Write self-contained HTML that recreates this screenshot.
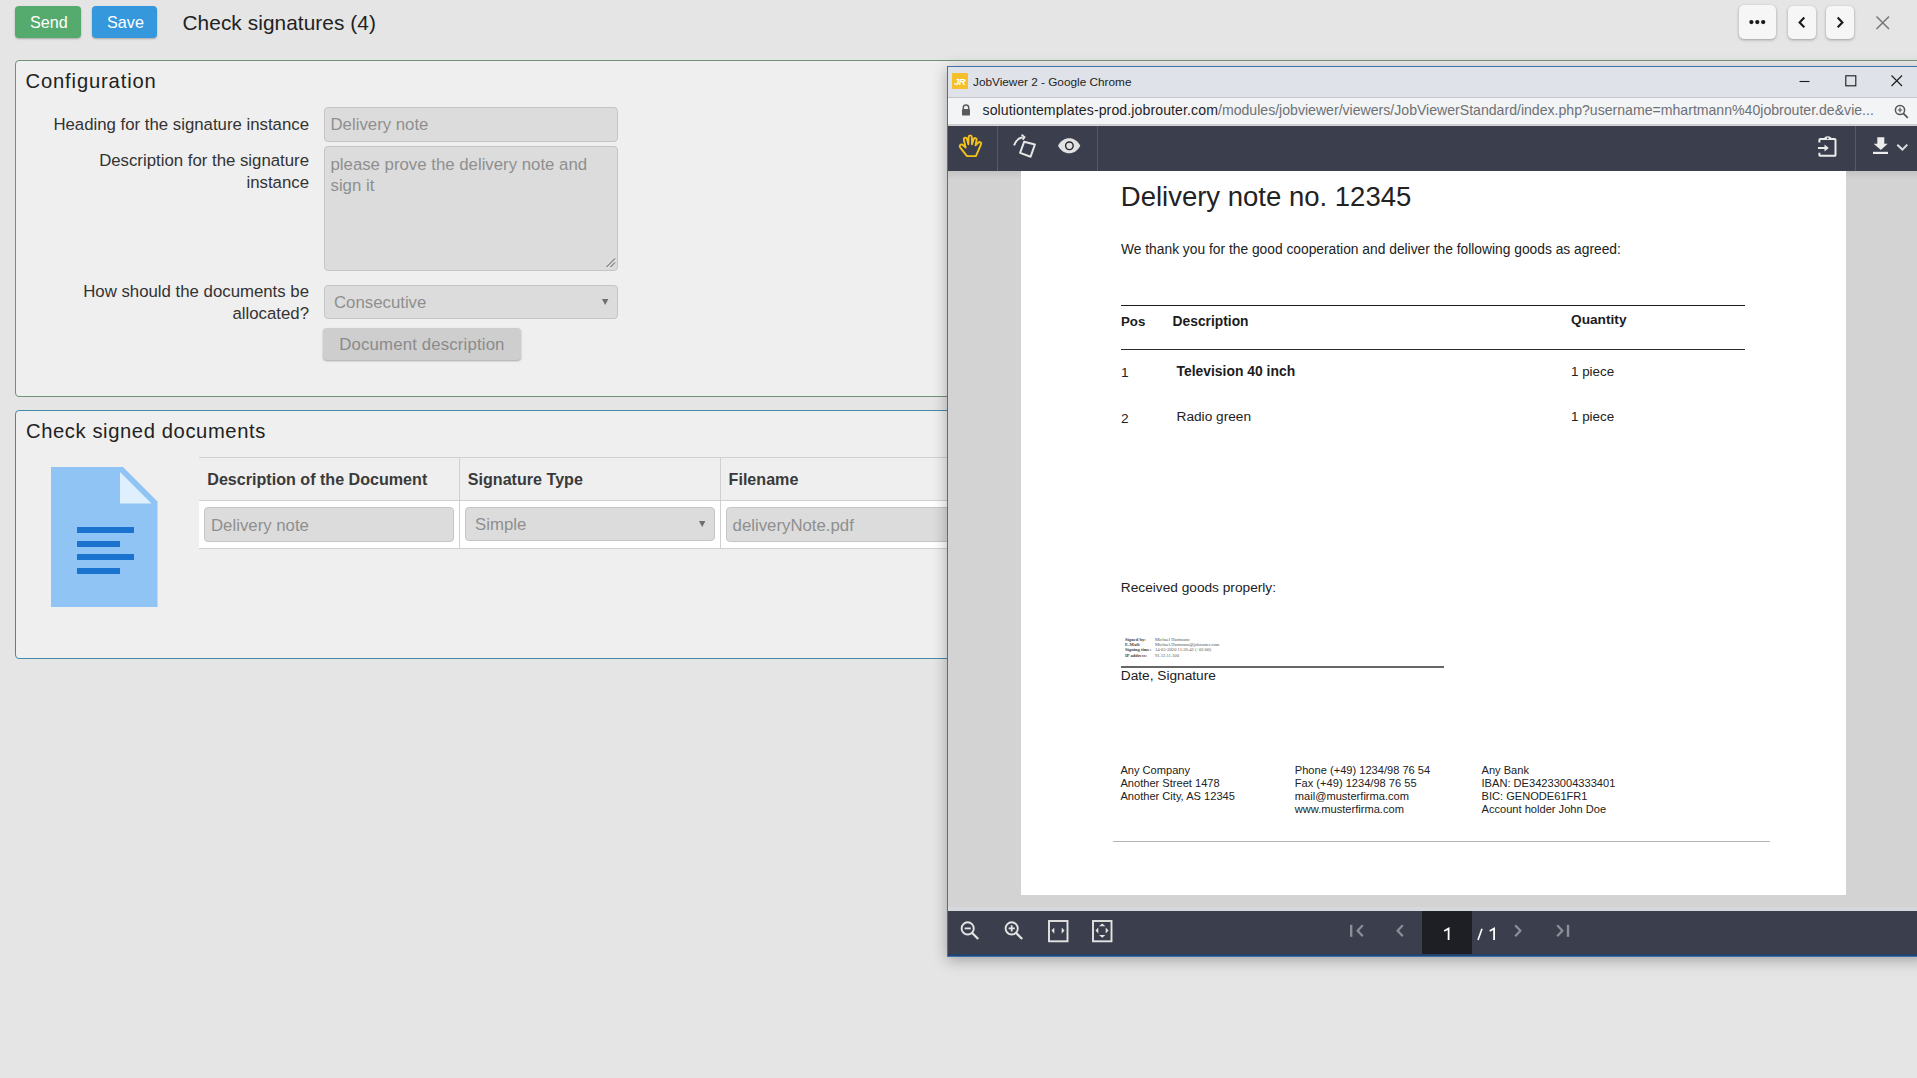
<!DOCTYPE html>
<html><head><meta charset="utf-8">
<style>
*{box-sizing:border-box;margin:0;padding:0}
html,body{width:1917px;height:1078px;overflow:hidden}
body{background:#e5e5e5;font-family:"Liberation Sans",sans-serif;position:relative;color:#222}
.a{position:absolute}
.t{position:absolute;line-height:1;white-space:nowrap}
.btn{position:absolute;border-radius:4px;box-shadow:0 1px 2px rgba(0,0,0,.28)}
.tbtn{position:absolute;background:#f6f6f6;border-radius:5px;box-shadow:0 1px 3px rgba(0,0,0,.32)}
.panel{position:absolute;background:#efefef;border-radius:4px}
.inp{position:absolute;background:#dcdcdc;border:1px solid #c5c5c5;border-radius:4px}
svg{position:absolute;overflow:visible}
</style></head>
<body>
<div class="btn" style="left:15px;top:6px;width:66px;height:32px;background:#55ab6d"></div>
<div class="btn" style="left:92px;top:6px;width:65px;height:32px;background:#3598dc"></div>
<div class="t" style="left:30px;top:14px;font-size:16.2px;color:#fff">Send</div>
<div class="t" style="left:107px;top:14px;font-size:16.2px;color:#fff">Save</div>
<div class="t" style="left:182.5px;top:13px;font-size:20.8px;color:#222;letter-spacing:0.08px">Check signatures (4)</div>
<div class="tbtn" style="left:1739px;top:5px;width:37px;height:34px"></div>
<div class="tbtn" style="left:1788px;top:6px;width:28px;height:33px"></div>
<div class="tbtn" style="left:1826px;top:6px;width:28px;height:33px"></div>
<svg style="left:1739px;top:5px" width="37" height="34"><circle cx="12.4" cy="17.1" r="2.15" fill="#1a1a1a"/><circle cx="18.3" cy="17.1" r="2.15" fill="#1a1a1a"/><circle cx="24.2" cy="17.1" r="2.15" fill="#1a1a1a"/></svg>
<svg style="left:1788px;top:6px" width="28" height="33"><path d="M16.3 11.6 L11.6 16.4 L16.3 21.2" fill="none" stroke="#1a1a1a" stroke-width="2.1"/></svg>
<svg style="left:1826px;top:6px" width="28" height="33"><path d="M11.7 11.6 L16.4 16.4 L11.7 21.2" fill="none" stroke="#1a1a1a" stroke-width="2.1"/></svg>
<svg style="left:1876px;top:16px" width="14" height="14"><path d="M0.5 0.5 L13 13 M13 0.5 L0.5 13" fill="none" stroke="#7a7a7a" stroke-width="1.6"/></svg>
<div class="panel" style="left:15px;top:60px;width:2000px;height:337px;border:1px solid #71917a"></div>
<div class="t" style="left:25.5px;top:71px;font-size:20.2px;color:#222;letter-spacing:0.85px">Configuration</div>
<div class="t" style="right:1608px;text-align:right;top:117px;font-size:16.8px;color:#333">Heading for the signature instance</div>
<div class="t" style="right:1608px;text-align:right;top:153px;font-size:16.8px;color:#333">Description for the signature</div>
<div class="t" style="right:1608px;text-align:right;top:175px;font-size:16.8px;color:#333">instance</div>
<div class="t" style="right:1608px;text-align:right;top:284px;font-size:16.8px;color:#333">How should the documents be</div>
<div class="t" style="right:1608px;text-align:right;top:306px;font-size:16.8px;color:#333">allocated?</div>
<div class="inp" style="left:324px;top:107px;width:294px;height:35px"></div>
<div class="t" style="left:330.5px;top:117px;font-size:16.8px;color:#8f8f8f">Delivery note</div>
<div class="inp" style="left:324px;top:146px;width:294px;height:125px"></div>
<div class="t" style="left:330.5px;top:157px;font-size:16.8px;color:#8f8f8f">please prove the delivery note and</div>
<div class="t" style="left:330.5px;top:178px;font-size:16.8px;color:#8f8f8f">sign it</div>
<svg style="left:604px;top:257px" width="12" height="12"><path d="M11 1.5 L2.5 10 M11 5.5 L6.5 10" stroke="#505050" stroke-width="1"/></svg>
<div class="inp" style="left:324px;top:285px;width:294px;height:34px"></div>
<div class="t" style="left:334px;top:295px;font-size:16.8px;color:#8f8f8f">Consecutive</div>
<svg style="left:602px;top:299px" width="8" height="8"><path d="M0 0 H6.4 L3.2 6 Z" fill="#707070"/></svg>
<div class="a" style="left:323px;top:328px;width:198px;height:32px;background:#cecece;border-radius:4px;box-shadow:0 1px 2px rgba(0,0,0,.3)"></div>
<div class="t" style="left:339.3px;top:337px;font-size:16.8px;color:#8b8b8b;letter-spacing:0.15px">Document description</div>
<div class="panel" style="left:15px;top:410px;width:2000px;height:249px;border:1px solid #4589a8"></div>
<div class="t" style="left:26px;top:421px;font-size:20.2px;color:#222;letter-spacing:0.6px">Check signed documents</div>
<svg style="left:50px;top:467px" width="108" height="141" viewBox="0 0 108 141">
<path d="M1 0 H73 L107.5 34.5 V140 H1 Z" fill="#90c4f4"/>
<path d="M70 5 L101.5 36.6 H70 Z" fill="#def0fd"/>
<rect x="27" y="60" width="57" height="6" fill="#1b73d0"/>
<rect x="27" y="74" width="43" height="6" fill="#1b73d0"/>
<rect x="27" y="87" width="57" height="6" fill="#1b73d0"/>
<rect x="27" y="101" width="43" height="6" fill="#1b73d0"/>
</svg>
<div class="a" style="left:199px;top:457px;width:760px;height:44px;border-top:1px solid #d0d0d0;border-bottom:1px solid #d0d0d0"></div>
<div class="a" style="left:199px;top:501px;width:760px;height:48px;background:#fff;border-bottom:1px solid #d0d0d0"></div>
<div class="a" style="left:459px;top:457px;width:1px;height:92px;background:#d0d0d0"></div>
<div class="a" style="left:720px;top:457px;width:1px;height:92px;background:#d0d0d0"></div>
<div class="t" style="left:207.3px;top:471px;font-size:16.1px;color:#3a3a3a;font-weight:bold">Description of the Document</div>
<div class="t" style="left:467.8px;top:471px;font-size:16.1px;color:#3a3a3a;font-weight:bold">Signature Type</div>
<div class="t" style="left:728.6px;top:471px;font-size:16.1px;color:#3a3a3a;font-weight:bold">Filename</div>
<div class="inp" style="left:204px;top:507px;width:250px;height:35px"></div>
<div class="t" style="left:211px;top:518px;font-size:16.8px;color:#8f8f8f">Delivery note</div>
<div class="inp" style="left:465px;top:507px;width:250px;height:34px"></div>
<div class="t" style="left:475px;top:517px;font-size:16.8px;color:#8f8f8f">Simple</div>
<svg style="left:699px;top:521px" width="8" height="8"><path d="M0 0 H6.4 L3.2 6 Z" fill="#707070"/></svg>
<div class="inp" style="left:726px;top:507px;width:260px;height:35px"></div>
<div class="t" style="left:732.6px;top:518px;font-size:16.8px;color:#8f8f8f">deliveryNote.pdf</div>
<div class="a" style="left:947px;top:66px;width:980px;height:891px;box-shadow:0 3px 14px rgba(0,0,0,.30)"></div>
<div class="a" style="left:947px;top:66px;width:980px;height:891px;background:#d3d3d3;border:1px solid #3f72aa;border-right:none"></div>
<div class="a" style="left:948px;top:67px;width:969px;height:31px;background:#dfe2e8;border-bottom:1px solid #c3c5c9"></div>
<div class="a" style="left:952px;top:72.5px;width:16px;height:16.5px;background:#f5c02a;border-radius:1px"></div>
<div class="t" style="left:954px;top:77px;font-size:9.5px;color:#fff;font-weight:bold;font-style:italic;letter-spacing:-0.5px">JR</div>
<div class="t" style="left:973px;top:77px;font-size:11.8px;color:#1e1e1e">JobViewer 2 - Google Chrome</div>
<svg style="left:1799px;top:80px" width="12" height="4"><path d="M0.5 1.5 H10.5" stroke="#1a1a1a" stroke-width="1.1"/></svg>
<svg style="left:1845px;top:75px" width="12" height="12"><rect x="0.8" y="0.8" width="10" height="10" fill="none" stroke="#1a1a1a" stroke-width="1.1"/></svg>
<svg style="left:1891px;top:75px" width="12" height="12"><path d="M0.5 0.5 L11 11 M11 0.5 L0.5 11" stroke="#1a1a1a" stroke-width="1.1"/></svg>
<div class="a" style="left:948px;top:98px;width:969px;height:27px;background:#f3f4f6;border-bottom:1px solid #cbcccf"></div>
<svg style="left:961px;top:104px" width="10" height="12"><path d="M2.3 5 V3.6 A2.7 2.7 0 0 1 7.7 3.6 V5" fill="none" stroke="#5a5a5a" stroke-width="1.5"/><rect x="1" y="5" width="8" height="6.5" rx="0.8" fill="#5a5a5a"/></svg>
<div class="t" style="left:982.5px;top:103px;font-size:14.1px;color:#1f1f1f"><span style="letter-spacing:0.1px">solutiontemplates-prod.jobrouter.com</span><span style="color:#6e7175">/modules/jobviewer/viewers/JobViewerStandard/index.php?username=mhartmann%40jobrouter.de&amp;vie...</span></div>
<svg style="left:1894px;top:104px" width="15" height="15"><circle cx="6" cy="6" r="4.6" fill="none" stroke="#555" stroke-width="1.5"/><path d="M9.3 9.3 L13.8 13.8" stroke="#555" stroke-width="1.8"/><path d="M3.8 6 H8.2 M6 3.8 V8.2" stroke="#555" stroke-width="1.2"/></svg>
<div class="a" style="left:948px;top:126px;width:969px;height:45px;background:#3b3e4c"></div>
<div class="a" style="left:997px;top:126px;width:1px;height:45px;background:#575a66"></div>
<div class="a" style="left:1097px;top:126px;width:1px;height:45px;background:#575a66"></div>
<div class="a" style="left:1855px;top:126px;width:1px;height:45px;background:#575a66"></div>
<svg style="left:955px;top:130px" width="32" height="32"><path d="M12 26.1 L5.3 17.6 Q4 15.7 5.6 14.7 Q6.9 14 8.1 15.2 L10.6 17.5 L8.9 10.1 Q8.5 8.1 10.1 7.7 Q11.5 7.4 12 9 L13.4 14.3 L13.6 7.1 Q13.7 5.4 15.2 5.4 Q16.7 5.4 16.8 7.1 L17 14.3 L18.6 9.4 Q19.1 7.8 20.5 8.1 Q21.9 8.5 21.6 10.1 L20.5 15.4 L23.4 12.6 Q24.6 11.6 25.7 12.5 Q26.6 13.5 25.8 14.8 L20.9 26.1 Z" fill="none" stroke="#f4c21c" stroke-width="1.9" stroke-linejoin="round"/></svg>
<svg style="left:1013px;top:133px" width="26" height="27"><path d="M1.1 12.4 Q3.3 5.6 9.6 4.3" fill="none" stroke="#e6e6e6" stroke-width="2"/><path d="M8.6 1.6 L11.5 4.1 L9.6 6.6" fill="none" stroke="#e6e6e6" stroke-width="1.9"/><path d="M11.2 8.7 L21.9 11.5 L17.6 23.7 L7.1 19.9 Z" fill="none" stroke="#e6e6e6" stroke-width="2" stroke-linejoin="round"/></svg>
<svg style="left:1058px;top:138px" width="24" height="17"><path d="M0 7.7 C5 -2.4 17.3 -2.4 22.3 7.7 C17.3 17.8 5 17.8 0 7.7 Z" fill="#e2e2e2"/><circle cx="11.4" cy="7.8" r="3.8" fill="#e2e2e2" stroke="#26282f" stroke-width="1.4"/></svg>
<svg style="left:1817px;top:135px" width="22" height="23"><path d="M2.4 7.5 V4.8 Q2.4 3.9 3.3 3.9 H17.6 Q18.5 3.9 18.5 4.8 V19.9 Q18.5 20.8 17.6 20.8 H3.3 Q2.4 20.8 2.4 19.9 V17.7" fill="none" stroke="#ececec" stroke-width="2"/><path d="M7 4.5 Q7 1.2 10.8 1.2 Q14.6 1.2 14.6 4.5 Z" fill="#ececec"/><circle cx="10.8" cy="3.3" r="0.9" fill="#3b3e4c"/><path d="M1 13 H8" stroke="#ececec" stroke-width="2"/><path d="M7.5 9.6 L11.8 13 L7.5 16.4 Z" fill="#ececec"/></svg>
<svg style="left:1873px;top:137px" width="16" height="18"><path d="M4.3 0.3 H11.3 V6.7 H14.7 L7.8 12.9 L0.7 6.7 H4.3 Z" fill="#ececec"/><rect x="0" y="14.8" width="15" height="2.2" fill="#ececec"/></svg>
<svg style="left:1896px;top:143px" width="13" height="9"><path d="M1.3 1.8 L6.4 6.6 L11.3 1.6" fill="none" stroke="#e0e0e0" stroke-width="2"/></svg>
<div class="a" style="left:1021px;top:171px;width:825px;height:724px;background:#fff"></div>
<div class="a" style="left:948px;top:171px;width:73px;height:8px;background:linear-gradient(rgba(0,0,0,.07),rgba(0,0,0,0))"></div>
<div class="a" style="left:1846px;top:171px;width:71px;height:8px;background:linear-gradient(rgba(0,0,0,.07),rgba(0,0,0,0))"></div>
<div class="t" style="left:1120.8px;top:183px;font-size:27.5px;color:#222">Delivery note no. 12345</div>
<div class="t" style="left:1121px;top:243px;font-size:13.8px;color:#222">We thank you for the good cooperation and deliver the following goods as agreed:</div>
<div class="a" style="left:1121px;top:304.5px;width:624px;height:1.4px;background:#1c1c1c"></div>
<div class="a" style="left:1121px;top:348.5px;width:624px;height:1.6px;background:#2a2a2a"></div>
<div class="t" style="left:1121px;top:315px;font-size:13.3px;color:#1c1c1c;font-weight:bold">Pos</div>
<div class="t" style="left:1172.6px;top:315px;font-size:13.8px;color:#1c1c1c;font-weight:bold">Description</div>
<div class="t" style="left:1571px;top:313px;font-size:13.7px;color:#1c1c1c;font-weight:bold">Quantity</div>
<div class="t" style="left:1121px;top:366px;font-size:13.7px;color:#222">1</div>
<div class="t" style="left:1176.5px;top:365px;font-size:13.9px;color:#1c1c1c;font-weight:bold">Television 40 inch</div>
<div class="t" style="left:1571px;top:365px;font-size:13.4px;color:#222">1 piece</div>
<div class="t" style="left:1121px;top:412px;font-size:13.7px;color:#222">2</div>
<div class="t" style="left:1176.5px;top:410px;font-size:13.7px;color:#222">Radio green</div>
<div class="t" style="left:1571px;top:410px;font-size:13.4px;color:#222">1 piece</div>
<div class="t" style="left:1120.8px;top:581px;font-size:13.7px;color:#222">Received goods properly:</div>
<div class="t" style="left:1125px;top:638px;font-size:4.6px;color:#444;font-weight:bold;font-family:'Liberation Serif'">Signed by:</div>
<div class="t" style="left:1155px;top:638px;font-size:4.6px;color:#555;font-family:'Liberation Serif'">Michael Hartmann</div>
<div class="t" style="left:1125px;top:643px;font-size:4.6px;color:#444;font-weight:bold;font-family:'Liberation Serif'">E-Mail:</div>
<div class="t" style="left:1155px;top:643px;font-size:4.6px;color:#555;font-family:'Liberation Serif'">Michael.Hartmann@jobrouter.com</div>
<div class="t" style="left:1125px;top:648px;font-size:4.6px;color:#444;font-weight:bold;font-family:'Liberation Serif'">Signing time:</div>
<div class="t" style="left:1155px;top:648px;font-size:4.6px;color:#555;font-family:'Liberation Serif'">14-05-2020 11:36:42 (+02:00)</div>
<div class="t" style="left:1125px;top:654px;font-size:4.6px;color:#444;font-weight:bold;font-family:'Liberation Serif'">IP address:</div>
<div class="t" style="left:1155px;top:654px;font-size:4.6px;color:#555;font-family:'Liberation Serif'">91.12.11.100</div>
<div class="a" style="left:1121px;top:666px;width:323px;height:1.8px;background:#666"></div>
<div class="t" style="left:1120.8px;top:669px;font-size:13.7px;color:#222">Date, Signature</div>
<div class="t" style="left:1120.4px;top:765px;font-size:11.1px;color:#222">Any Company</div>
<div class="t" style="left:1120.4px;top:778px;font-size:11.1px;color:#222">Another Street 1478</div>
<div class="t" style="left:1120.4px;top:791px;font-size:11.1px;color:#222">Another City, AS 12345</div>
<div class="t" style="left:1294.8px;top:765px;font-size:11.1px;color:#222">Phone (+49) 1234/98 76 54</div>
<div class="t" style="left:1294.8px;top:778px;font-size:11.1px;color:#222">Fax (+49) 1234/98 76 55</div>
<div class="t" style="left:1294.8px;top:791px;font-size:11.1px;color:#222">mail@musterfirma.com</div>
<div class="t" style="left:1294.8px;top:804px;font-size:11.1px;color:#222">www.musterfirma.com</div>
<div class="t" style="left:1481.5px;top:765px;font-size:11.1px;color:#222">Any Bank</div>
<div class="t" style="left:1481.5px;top:778px;font-size:11.1px;color:#222">IBAN: DE34233004333401</div>
<div class="t" style="left:1481.5px;top:791px;font-size:11.1px;color:#222">BIC: GENODE61FR1</div>
<div class="t" style="left:1481.5px;top:804px;font-size:11.1px;color:#222">Account holder John Doe</div>
<div class="a" style="left:1113px;top:840.5px;width:657px;height:1.3px;background:#b4b4b4"></div>
<div class="a" style="left:948px;top:907px;width:969px;height:4px;background:#d6d9dc"></div>
<div class="a" style="left:948px;top:911px;width:969px;height:45px;background:#3b3e4c;border-bottom:2.5px solid #24426a"></div>
<svg style="left:958px;top:919px" width="24" height="24"><circle cx="9.7" cy="9.4" r="6.1" fill="none" stroke="#e4e4e4" stroke-width="1.9"/><path d="M6.6 9.4 H12.8" stroke="#e4e4e4" stroke-width="1.8"/><path d="M14.2 14 L20.2 20" stroke="#e4e4e4" stroke-width="2.3"/></svg>
<svg style="left:1002px;top:919px" width="24" height="24"><circle cx="9.7" cy="9.4" r="6.1" fill="none" stroke="#e4e4e4" stroke-width="1.9"/><path d="M6.6 9.4 H12.8 M9.7 6.3 V12.5" stroke="#e4e4e4" stroke-width="1.8"/><path d="M14.2 14 L20.2 20" stroke="#e4e4e4" stroke-width="2.3"/></svg>
<svg style="left:1048px;top:920px" width="21" height="23"><rect x="1" y="1" width="18.5" height="20.3" fill="none" stroke="#e4e4e4" stroke-width="1.9"/><path d="M3.5 10.6 L6.3 7.4 V13.8 Z M16.5 10.6 L13.7 7.4 V13.8 Z" fill="#e4e4e4"/></svg>
<svg style="left:1092px;top:920px" width="21" height="23"><rect x="1" y="1" width="18.5" height="20.3" fill="none" stroke="#e4e4e4" stroke-width="1.9"/><path d="M3.5 10.6 L6.3 7.6 V13.6 Z M16.5 10.6 L13.7 7.6 V13.6 Z M10.2 3.6 L7 6.3 H13.4 Z M10.2 17.8 L7 15.1 H13.4 Z" fill="#e4e4e4"/></svg>
<svg style="left:1348px;top:923px" width="18" height="16"><path d="M3.2 1.8 V13.8" stroke="#8d8f98" stroke-width="2.4"/><path d="M14.8 2.3 L9.6 7.8 L14.8 13.3" fill="none" stroke="#8d8f98" stroke-width="2.2"/></svg>
<svg style="left:1394px;top:923px" width="12" height="16"><path d="M8.8 2.3 L3.6 7.8 L8.8 13.3" fill="none" stroke="#8d8f98" stroke-width="2.2"/></svg>
<svg style="left:1512px;top:923px" width="12" height="16"><path d="M3.2 2.3 L8.4 7.8 L3.2 13.3" fill="none" stroke="#8d8f98" stroke-width="2.2"/></svg>
<svg style="left:1554px;top:923px" width="18" height="16"><path d="M3.2 2.3 L8.4 7.8 L3.2 13.3" fill="none" stroke="#8d8f98" stroke-width="2.2"/><path d="M14 1.8 V13.8" stroke="#8d8f98" stroke-width="2.4"/></svg>
<div class="a" style="left:1422px;top:911px;width:50px;height:43px;background:#1e1f25"></div>
<svg style="left:1442px;top:928px" width="40" height="15"><path d="M2.2 3 L6.6 0.5 V12" fill="none" stroke="#fff" stroke-width="1.8"/></svg>
<svg style="left:1476px;top:928px" width="40" height="15"><path d="M6 0.8 L2 12" fill="none" stroke="#fff" stroke-width="1.6"/><path d="M13.7 3 L18.1 0.5 V12" fill="none" stroke="#fff" stroke-width="1.8"/></svg>
</body></html>
